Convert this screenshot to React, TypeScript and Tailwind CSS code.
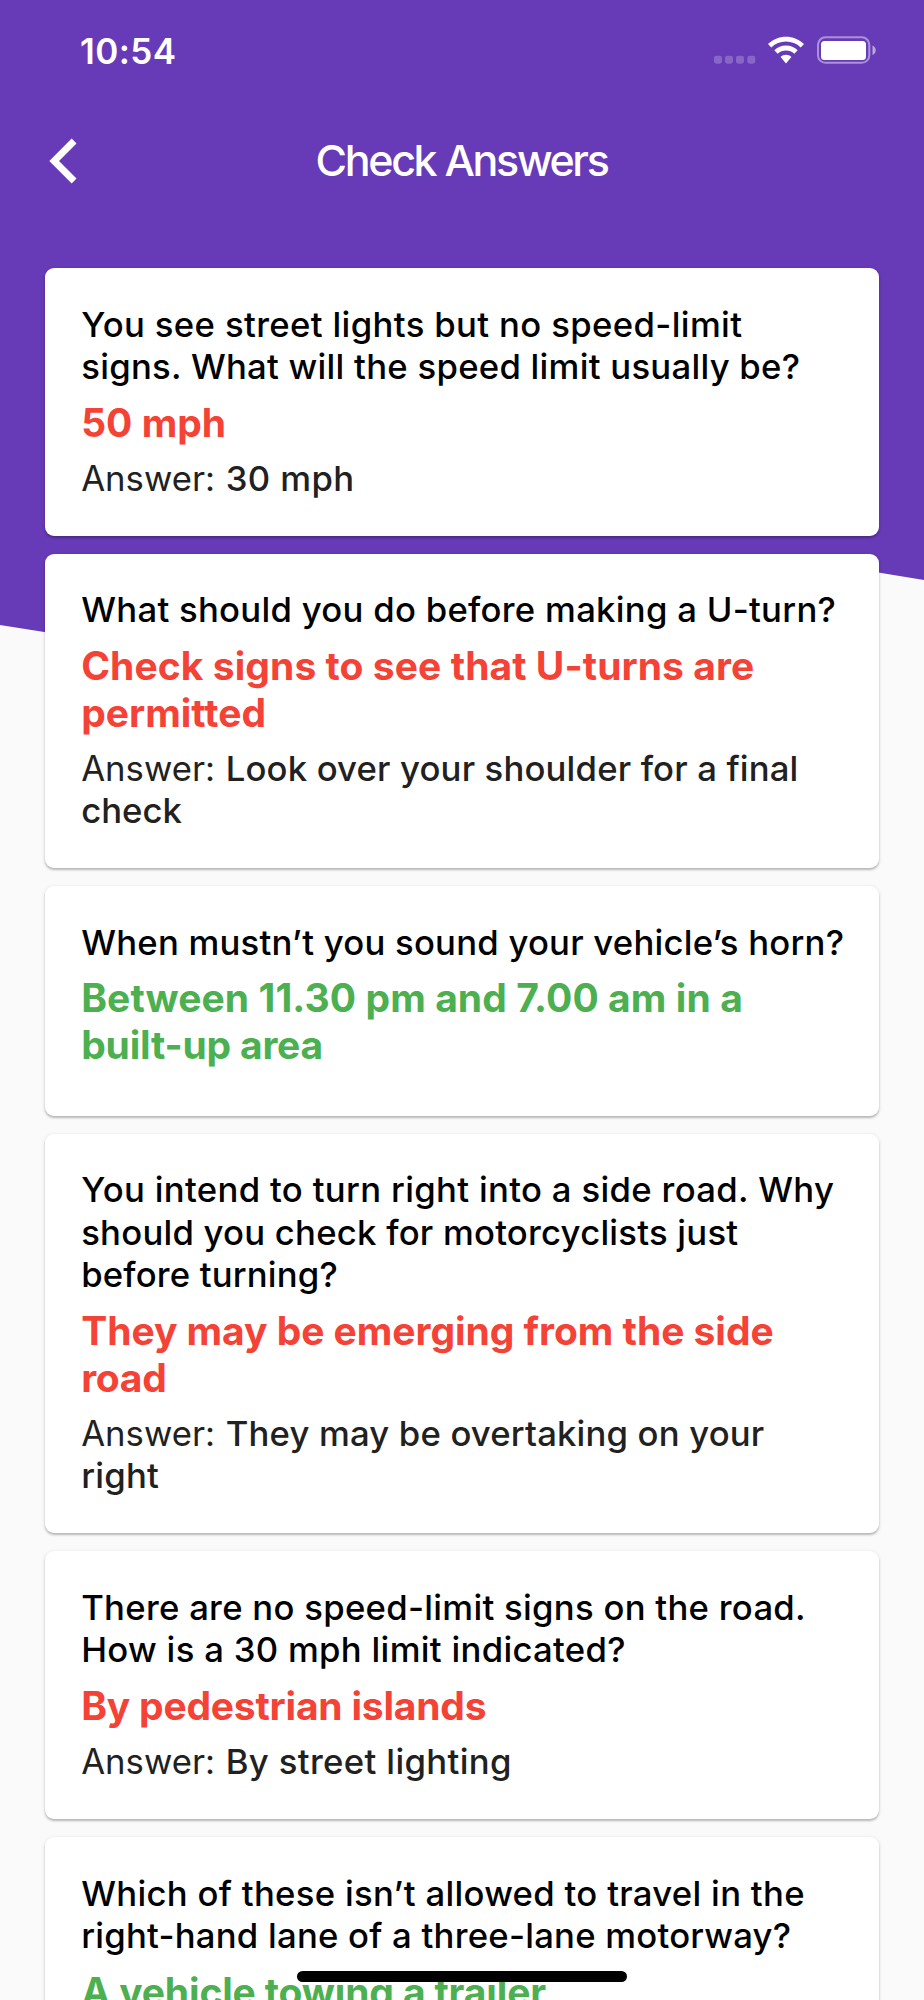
type Line = [text: string, tracking: string];

type Review = {
  question: Line[];
  given: Line[];
  correct: boolean;
  answer?: Line[];
};

const reviews: Review[] = [
  {
    question: [
      ["You see street lights but no speed-limit", "tracking-[0.36px]"],
      ["signs. What will the speed limit usually be?", "tracking-[0.26px]"],
    ],
    given: [["50 mph", "tracking-normal"]],
    correct: false,
    answer: [["30 mph", "tracking-[0.4px]"]],
  },
  {
    question: [["What should you do before making a U-turn?", "tracking-[0.28px]"]],
    given: [
      ["Check signs to see that U-turns are", "tracking-[0.07px]"],
      ["permitted", "tracking-normal"],
    ],
    correct: false,
    answer: [
      ["Look over your shoulder for a final", "tracking-[0.16px]"],
      ["check", "tracking-normal"],
    ],
  },
  {
    question: [["When mustn’t you sound your vehicle’s horn?", "tracking-[0.23px]"]],
    given: [
      ["Between 11.30 pm and 7.00 am in a", "tracking-[0.08px]"],
      ["built-up area", "tracking-[-0.2px]"],
    ],
    correct: true,
  },
  {
    question: [
      ["You intend to turn right into a side road. Why", "tracking-[0.33px]"],
      ["should you check for motorcyclists just", "tracking-[0.23px]"],
      ["before turning?", "tracking-[0.17px]"],
    ],
    given: [
      ["They may be emerging from the side", "tracking-[-0.04px]"],
      ["road", "tracking-[-0.3px]"],
    ],
    correct: false,
    answer: [
      ["They may be overtaking on your", "tracking-[0.17px]"],
      ["right", "tracking-[0.2px]"],
    ],
  },
  {
    question: [
      ["There are no speed-limit signs on the road.", "tracking-[0.28px]"],
      ["How is a 30 mph limit indicated?", "tracking-[0.3px]"],
    ],
    given: [["By pedestrian islands", "tracking-[-0.21px]"]],
    correct: false,
    answer: [["By street lighting", "tracking-[0.36px]"]],
  },
  {
    question: [
      ["Which of these isn’t allowed to travel in the", "tracking-[0.3px]"],
      ["right-hand lane of a three-lane motorway?", "tracking-[0.23px]"],
    ],
    given: [["A vehicle towing a trailer", "tracking-[-0.15px]"]],
    correct: true,
  },
];

function StatusBar() {
  return (
    <div className="flex h-[101px] items-start justify-between pt-[29px] pr-[48px] pl-[80px] text-white">
      <span className="text-[35px] leading-[44px] font-semibold tracking-[0.4px]">10:54</span>
      <svg width="164" height="30" viewBox="0 0 164 30" className="mt-[6px]" fill="none">
        <g fill="#fff" fillOpacity=".22">
          <rect x="2" y="20.700" width="8" height="8" rx="2.4" />
          <rect x="13" y="20.700" width="8" height="8" rx="2.4" />
          <rect x="24" y="20.700" width="8" height="8" rx="2.4" />
          <rect x="35.300" y="20.700" width="8" height="8" rx="2.4" />
        </g>
        <g fill="#fff">
          <path d="M74 1.700c6.800 0 13.200 2.700 18 7.300l-3.300 3.500a21.200 21.200 0 0 0-29.400 0L56 9c4.800-4.600 11.200-7.300 18-7.300Z" />
          <path d="M74 10.600c4.500 0 8.600 1.700 11.700 4.700l-3.400 3.500a12 12 0 0 0-16.600 0l-3.400-3.500c3.100-3 7.200-4.700 11.700-4.700Z" />
          <path d="M74 19.700c2.100 0 4 .8 5.400 2.200L74 28.500l-5.400-6.600c1.400-1.400 3.300-2.200 5.400-2.200Z" />
        </g>
        <rect x="106" y="2.300" width="51.300" height="25.500" rx="7.500" stroke="#fff" strokeOpacity=".45" strokeWidth="2" />
        <rect x="109" y="6" width="45" height="19" rx="3.500" fill="#fff" />
        <path d="M160.500 10.500c2 .8 3.200 2.700 3.200 4.800s-1.200 4-3.200 4.800Z" fill="#fff" fillOpacity=".55" />
      </svg>
    </div>
  );
}

function TitleBar() {
  return (
    <div className="grid h-[120px] grid-cols-[104px_1fr_104px] items-center text-white">
      <button aria-label="Back" className="ml-[47px] flex">
        <svg width="32" height="46" viewBox="0 0 32 46" fill="none">
          <path d="M27.100 3 7.100 23l20 20" stroke="#fff" strokeWidth="6.800" />
        </svg>
      </button>
      <h1 className="pr-[1px] pb-[2px] text-center text-[43px] leading-[52px] font-medium tracking-[-2.350px]">
        Check Answers
      </h1>
    </div>
  );
}

function Lines({ lines }: { lines: Line[] }) {
  return (
    <>
      {lines.map(([text, tracking]) => (
        <span key={text} className={`block ${tracking}`}>
          {text}
        </span>
      ))}
    </>
  );
}

function ReviewCard({ review }: { review: Review }) {
  const [first, ...rest] = review.answer ?? [];
  return (
    <article className="rounded-[9px] bg-white px-[36.500px] pt-[34.700px] pb-[36.740px] whitespace-nowrap shadow-[0_2px_2px_rgba(0,0,0,0.2),0_1px_4px_rgba(0,0,0,0.12)]">
      <p className="text-[34.700px] leading-[42.410px] font-medium text-black">
        <Lines lines={review.question} />
      </p>
      <p
        className={`mt-[12.300px] mb-[10px] text-[39px] leading-[46.870px] font-bold ${
          review.correct ? "text-[#4caf50]" : "text-[#f44336]"
        }`}
      >
        <Lines lines={review.given} />
      </p>
      {first && (
        <p className="text-[34.700px] leading-[42.410px] font-medium text-[#212121]">
          <span className="flex">
            <span className="w-[144.500px] font-normal">Answer:</span>
            <span className={first[1]}>{first[0]}</span>
          </span>
          <Lines lines={rest} />
        </p>
      )}
    </article>
  );
}

export default function App() {
  return (
    <div className="relative isolate h-[2000px] w-[924px] overflow-hidden bg-[#fafafa] font-['Inter',sans-serif]">
      <div className="absolute inset-x-0 top-0 -z-10 h-[640px] bg-[#673ab7] [clip-path:polygon(0_0,100%_0,100%_580px,860px_569.500px,60px_634.500px,0_625px)]" />
      <StatusBar />
      <TitleBar />
      <main className="flex flex-col gap-[17.860px] px-[44.700px] pt-[46.850px]">
        {reviews.map((review) => (
          <ReviewCard key={review.question[0][0]} review={review} />
        ))}
      </main>
      <div className="absolute top-[1970.500px] left-[297px] h-[11.500px] w-[330px] rounded-full bg-black" />
    </div>
  );
}
